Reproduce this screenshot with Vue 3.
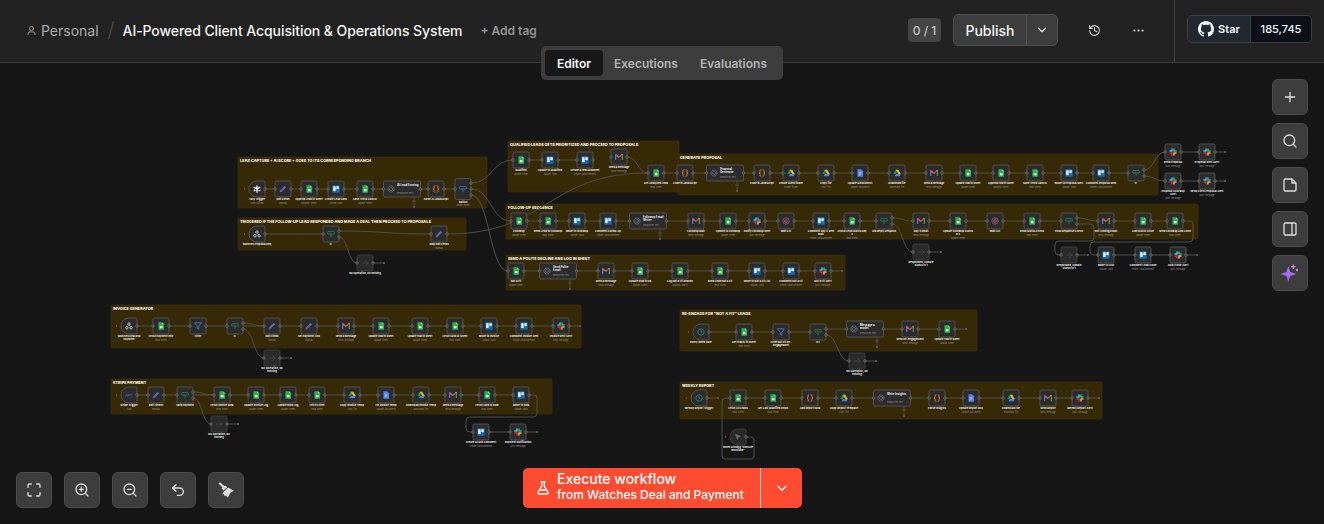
<template>
  <div class="page">
    <header class="topbar">
      <div class="crumbs">
        <svg class="user-icon" viewBox="0 0 16 16" fill="none" stroke="currentColor" stroke-width="1.2" stroke-linecap="round">
          <circle cx="8" cy="5" r="3" />
          <path d="M3 14v-1.2A3 3 0 0 1 6 10h4a3 3 0 0 1 3 2.8V14" />
        </svg>
        <span class="personal">Personal</span>
        <span class="slash">/</span>
        <span class="title">AI-Powered Client Acquisition &amp; Operations System</span>
        <span class="add-tag">+ Add tag</span>
      </div>
      <div class="actions">
        <span class="counter">0 / 1</span>
        <div class="publish">
          <button class="publish-main">Publish</button>
          <button class="publish-more">
            <svg viewBox="0 0 16 16" fill="none" stroke="currentColor" stroke-width="1.4" stroke-linecap="round" stroke-linejoin="round"><path d="M4 6l4 4 4-4" /></svg>
          </button>
        </div>
        <button class="bare history">
          <svg viewBox="0 0 24 24" fill="none" stroke="currentColor" stroke-width="2" stroke-linecap="round" stroke-linejoin="round"><path d="M3 12a9 9 0 1 0 3-6.7L3 8" /><path d="M3 3v5h5" /><path d="M12 7v5l4 2" /></svg>
        </button>
        <button class="bare dots">
          <svg viewBox="0 0 16 16" fill="currentColor"><circle cx="3" cy="8" r="1.3" /><circle cx="8" cy="8" r="1.3" /><circle cx="13" cy="8" r="1.3" /></svg>
        </button>
      </div>
      <div class="star-wrap">
        <div class="gh-star">
          <span class="gh-left">
            <svg viewBox="0 0 16 16" fill="currentColor"><path d="M8 0C3.58 0 0 3.58 0 8c0 3.54 2.29 6.53 5.47 7.59.4.07.55-.17.55-.38 0-.19-.01-.82-.01-1.49-2.01.37-2.53-.49-2.69-.94-.09-.23-.48-.94-.82-1.13-.28-.15-.68-.52-.01-.53.63-.01 1.08.58 1.23.82.72 1.21 1.87.87 2.33.66.07-.52.28-.87.51-1.07-1.78-.2-3.64-.89-3.64-3.95 0-.87.31-1.59.82-2.15-.08-.2-.36-1.02.08-2.12 0 0 .67-.21 2.2.82.64-.18 1.32-.27 2-.27.68 0 1.36.09 2 .27 1.53-1.04 2.2-.82 2.2-.82.44 1.1.16 1.92.08 2.12.51.56.82 1.27.82 2.15 0 3.07-1.87 3.75-3.65 3.95.29.25.54.73.54 1.48 0 1.07-.01 1.93-.01 2.2 0 .21.15.46.55.38A8.013 8.013 0 0016 8c0-4.42-3.58-8-8-8z" /></svg>
            Star
          </span>
          <span class="gh-count">185,745</span>
        </div>
      </div>
    </header>

    <main class="canvas">
      <svg class="flow" viewBox="0 63 1324 461" width="1324" height="461">
        <defs>
          <symbol id="i-sheets" viewBox="0 0 10 10">
            <path d="M1.8 .2h4.5L8.8 2.700v7.100H1.800z" fill="#2bb24c" />
            <path d="M6.300 .2v2.500h2.500z" fill="#8fdca2" />
            <rect x="3.500" y="5" width="3.400" height="2.800" fill="#e8f7ec" />
          </symbol>
          <symbol id="i-trello" viewBox="0 0 10 10">
            <rect x=".3" y=".3" width="9.400" height="9.400" rx="1" fill="#0b6db3" />
            <rect x="1.600" y="1.600" width="2.900" height="6" fill="#fff" />
            <rect x="5.500" y="1.600" width="2.900" height="3.600" fill="#fff" />
          </symbol>
          <symbol id="i-gmail" viewBox="0 0 10 10">
            <path d="M.8 8.800V2.400L5 5.800" fill="none" stroke="#4285f4" stroke-width="1.500" />
            <path d="M1 2l4 3.200L9 2" fill="none" stroke="#ea4335" stroke-width="1.600" />
            <path d="M9.200 8.800V2.400" fill="none" stroke="#34a853" stroke-width="1.500" />
            <path d="M8.400 2.400l1-.8" fill="none" stroke="#fbbc04" stroke-width="1.400" />
          </symbol>
          <symbol id="i-slack" viewBox="0 0 10 10" fill="none" stroke-width="1.900" stroke-linecap="round">
            <path d="M3.800 1.200v2.600M1.200 3.800h2.600" stroke="#36c5f0" />
            <path d="M8.800 3.800H6.200M6.200 1.200v2.600" stroke="#2eb67d" />
            <path d="M6.200 8.800V6.200M8.800 6.200H6.200" stroke="#ecb22e" />
            <path d="M1.200 6.200h2.600M3.800 6.200v2.600" stroke="#e01e5a" />
          </symbol>
          <symbol id="i-drive" viewBox="0 0 10 10">
            <path d="M3.400 .8h3.200L3.400 6.400H.2z" fill="#0f9d58" />
            <path d="M6.600 .8L9.800 6.400H6.600L3.400 .8z" fill="#f4b400" />
            <path d="M2 9.200l1.600-2.800h6.200L8.200 9.200z" fill="#4285f4" />
          </symbol>
          <symbol id="i-docs" viewBox="0 0 10 10">
            <path d="M1.800 .2h4.500L8.800 2.700v7.100H1.800z" fill="#4f84f0" />
            <path d="M3.400 4.600h3.400M3.400 6h3.400M3.400 7.400h2.400" stroke="#dce8ff" stroke-width=".6" />
          </symbol>
          <symbol id="i-code" viewBox="0 0 10 10" fill="none" stroke="#ff8a1f" stroke-width="1.100" stroke-linecap="round">
            <path d="M3.600 .8C2.200 .8 2.600 2.400 2.600 3.400S2.200 5 1.200 5c1 0 1.400.6 1.400 1.600s-.4 2.600 1 2.600" />
            <path d="M6.400 .8c1.400 0 1 1.600 1 2.600S7.800 5 8.800 5c-1 0-1.400.6-1.400 1.600s.4 2.600-1 2.600" />
          </symbol>
          <symbol id="i-edit" viewBox="0 0 10 10">
            <path d="M.8 7.400L7 1l2 2-6.400 6.200H.8z" fill="#5f5fb3" />
            <path d="M2.200 7L7 2.200" stroke="#8d8de0" stroke-width=".4" />
          </symbol>
          <symbol id="i-if" viewBox="0 0 10 10" fill="none" stroke="#1f8a5b" stroke-width="1">
            <path d="M5 5v4" />
            <path d="M1.200 2h7.600L9.800 3.400 8.800 5H1.200L.4 3.400z" />
          </symbol>
          <symbol id="i-switch" viewBox="0 0 10 10" fill="none" stroke="#2f7fc1" stroke-width="1">
            <path d="M5 5v4" />
            <path d="M1.200 2h7.600L9.800 3.400 8.800 5H1.200L.4 3.400z" />
          </symbol>
          <symbol id="i-filter" viewBox="0 0 10 10">
            <path d="M.6 1h8.800L6 5.200V9L4 8V5.200z" fill="none" stroke="#3b82c4" stroke-width="1.100" stroke-linejoin="round" />
          </symbol>
          <symbol id="i-wait" viewBox="0 0 10 10" fill="none" stroke="#c4637c">
            <circle cx="5" cy="5" r="4" stroke-width=".8" />
            <circle cx="5" cy="5" r="1.700" stroke-width="1" />
          </symbol>
          <symbol id="i-noop" viewBox="0 0 10 10" fill="none" stroke="#4a4a4a" stroke-width="1.100">
            <path d="M1 5h8M5.400 1.600L9 5 5.400 8.400" />
          </symbol>
          <symbol id="i-webhook" viewBox="0 0 10 10" fill="none" stroke="#c9c9c9" stroke-width="1.200">
            <circle cx="5" cy="2.600" r="1.500" />
            <circle cx="2.400" cy="7.200" r="1.500" />
            <circle cx="7.600" cy="7.200" r="1.500" />
          </symbol>
          <symbol id="i-form" viewBox="0 0 10 10" fill="none" stroke="#fff" stroke-width="1.600" stroke-linecap="round">
            <path d="M5 1v8M1.500 3l7 4M8.500 3l-7 4" />
          </symbol>
          <symbol id="i-clock" viewBox="0 0 10 10" fill="none" stroke="#1f9a8c" stroke-width=".9">
            <circle cx="5" cy="5" r="4" />
            <path d="M5 2.600V5l1.600 1" />
          </symbol>
          <symbol id="i-stripe" viewBox="0 0 10 10" fill="none" stroke="#5f55e6" stroke-width=".9">
            <path d="M.6 6.400C1.400 4 3 3.600 3.600 5s-1 2-2 1.400M4.600 4v2.400M6.400 3.400v3M6.400 5c1-.9 2.800-.7 3 .4" />
          </symbol>
          <symbol id="i-ai" viewBox="0 0 10 10" fill="none" stroke="#a3a3a3" stroke-width=".9">
            <circle cx="5" cy="5" r="3.800" stroke-dasharray="1.200 .5" />
            <circle cx="5" cy="5" r="1.800" stroke-dasharray="1 .5" />
          </symbol>
          <symbol id="i-chat" viewBox="0 0 10 10">
            <path d="M1 1l8 3.200-3.200 1.200L4.400 9z" fill="#6a6a6a" />
          </symbol>
        </defs>

        <g v-for="s in stickies" :key="s.title">
          <rect class="sticky" :x="s.x" :y="s.y" :width="s.w" :height="s.h" rx="1" />
          <text class="sticky-title" :x="s.x + 2" :y="s.y + 5">{{ s.title }}</text>
        </g>

        <path v-for="(d, i) in edges" :key="'e' + i" class="edge" :d="d" />

        <g v-for="(e, i) in stubs" :key="'s' + i">
          <path class="edge" :d="`M${e[0]} ${e[1]}H${e[2]}`" />
          <rect class="end-dot" :x="e[2] - 1" :y="e[1] - 1" width="2" height="2" />
        </g>

        <g v-for="(n, i) in nodes" :key="'n' + i">
          <path class="node" :class="{ muted: n.icon === 'noop' || n.icon === 'chat' }" :d="nodeShape(n)" />
          <circle v-if="n.trigger" class="bolt" :cx="n.x - n.w / 2 - 4.5" :cy="n.y" r=".7" />
          <use :href="'#i-' + n.icon" :x="n.w > 20 ? n.x - n.w / 2 + 3.5 : n.x - 4" :y="n.y - 4" width="8" height="8" />
          <template v-if="n.w > 20">
            <text v-for="(l, k) in n.lines" :key="k" class="ai-label" :x="n.x - n.w / 2 + 13.5" :y="n.y - 3.5 + k * 3">{{ l }}</text>
            <text class="ai-sub" :x="n.x - n.w / 2 + 13.5" :y="n.y + 5">Resources Text</text>
            <path class="edge" :d="`M${n.x + 12} ${n.y + 8}V${n.y + 18}M${n.x + 10} ${n.y + 12}h4`" />
            <rect class="end-dot" :x="n.x + 11" :y="n.y + 17" width="2" height="2" />
          </template>
          <template v-else>
            <text v-for="(l, k) in n.lines" :key="k" class="label" :x="n.x" :y="n.y + n.h / 2 + 3.4 + k * 3">{{ l }}</text>
            <text v-if="n.sub" class="sub" :x="n.x" :y="n.y + n.h / 2 + 6.6 + (n.lines.length - 1) * 3">{{ n.sub }}</text>
          </template>
          <circle v-if="!n.trigger" class="port" :cx="n.x - n.w / 2" :cy="n.y" r="1.3" />
          <circle v-for="o in n.outs" :key="o" class="port" :cx="n.x + n.w / 2" :cy="n.y + o" r="1.3" />
        </g>
      </svg>

      <nav class="tabs">
        <span class="tab active">Editor</span>
        <span class="tab">Executions</span>
        <span class="tab">Evaluations</span>
      </nav>

      <aside class="side-tools">
        <button class="tool">
          <svg viewBox="0 0 24 24" fill="none" stroke="currentColor" stroke-width="2" stroke-linecap="round"><path d="M5 12h14M12 5v14" /></svg>
        </button>
        <button class="tool">
          <svg viewBox="0 0 24 24" fill="none" stroke="currentColor" stroke-width="2" stroke-linecap="round"><circle cx="11" cy="11" r="8" /><path d="M21 21l-4.300-4.300" /></svg>
        </button>
        <button class="tool">
          <svg viewBox="0 0 24 24" fill="none" stroke="currentColor" stroke-width="2" stroke-linejoin="round"><path d="M5 3h10l6 6v10a2 2 0 0 1-2 2H5a2 2 0 0 1-2-2V5a2 2 0 0 1 2-2z" /><path d="M15 3v6h6" /></svg>
        </button>
        <button class="tool">
          <svg viewBox="0 0 24 24" fill="none" stroke="currentColor" stroke-width="2"><rect x="3" y="3" width="18" height="18" rx="2" /><path d="M15 3v18" /></svg>
        </button>
        <button class="tool">
          <svg class="spark-icon" viewBox="0 0 20 20">
            <defs>
              <linearGradient id="spark" x1="0" y1="1" x2="1" y2="0">
                <stop offset="0" stop-color="#7a5cff" />
                <stop offset="1" stop-color="#d47bf0" />
              </linearGradient>
            </defs>
            <path d="M8.300 3l1.900 6.100 6.100 1.900-6.100 1.900-1.900 6.100-1.900-6.100L.3 11l6.100-1.900z" fill="url(#spark)" />
            <path d="M13.300 1.400v4.600M11 3.700h4.600" stroke="#c884f2" stroke-width="1.300" />
            <circle cx="17" cy="7" r="1.200" fill="#d47bf0" />
          </svg>
        </button>
      </aside>

      <div class="bottom-tools">
        <button class="tool">
          <svg viewBox="0 0 24 24" fill="none" stroke="currentColor" stroke-width="2" stroke-linecap="round"><path d="M3 8V5a2 2 0 0 1 2-2h3M16 3h3a2 2 0 0 1 2 2v3M21 16v3a2 2 0 0 1-2 2h-3M8 21H5a2 2 0 0 1-2-2v-3" /></svg>
        </button>
        <button class="tool">
          <svg viewBox="0 0 24 24" fill="none" stroke="currentColor" stroke-width="2" stroke-linecap="round"><circle cx="11" cy="11" r="8" /><path d="M21 21l-4.300-4.300M11 8v6M8 11h6" /></svg>
        </button>
        <button class="tool">
          <svg viewBox="0 0 24 24" fill="none" stroke="currentColor" stroke-width="2" stroke-linecap="round"><circle cx="11" cy="11" r="8" /><path d="M21 21l-4.300-4.300M8 11h6" /></svg>
        </button>
        <button class="tool">
          <svg viewBox="0 0 24 24" fill="none" stroke="currentColor" stroke-width="2" stroke-linecap="round" stroke-linejoin="round"><path d="M9 14L4 9l5-5" /><path d="M4 9h10.500a5.500 5.500 0 0 1 0 11H11" /></svg>
        </button>
        <button class="tool">
          <svg viewBox="0 0 16 16" fill="currentColor"><path d="M.5 1.500L2 .2l4.500 4-1.700 1.600z" /><path d="M3.600 6.200L7.300 3.400l1.900 1.800-3.700 3.400z" /><path d="M6 9.400l4-3.900 6 3.300-3.600 1.900-2.600 5-1.900-2.300-1 .9-1.500-2.400-1.500.5z" /></svg>
        </button>
      </div>

      <div class="execute">
        <button class="execute-main">
          <svg viewBox="0 0 24 24" fill="none" stroke="currentColor" stroke-width="2" stroke-linecap="round" stroke-linejoin="round"><path d="M9 3h6M10 3v6.500L4.500 18.500A1.700 1.700 0 0 0 6 21h12a1.700 1.700 0 0 0 1.500-2.500L14 9.500V3" /><path d="M7.500 15h9" /></svg>
          <span class="execute-text">
            <strong>Execute workflow</strong>
            <small>from Watches Deal and Payment</small>
          </span>
        </button>
        <button class="execute-more">
          <svg viewBox="0 0 16 16" fill="none" stroke="currentColor" stroke-width="1.500" stroke-linecap="round" stroke-linejoin="round"><path d="M3.500 6l4.500 4.500L12.500 6" /></svg>
        </button>
      </div>
    </main>
  </div>
</template>

<script setup>
const stickies = [
  { title: 'LEAD CAPTURE + AI SCORE + GOES TO ITS CORRESPONDING BRANCH', x: 238, y: 157, w: 249, h: 51 },
  { title: 'TRIGGERED IF THE FOLLOW-UP LEAD RESPONDED AND MADE A DEAL THEN PROCEED TO PROPOSALS', x: 238, y: 218, w: 228, h: 32 },
  { title: 'QUALIFIED LEADS GETS PRIORITIZED AND PROCEED TO PROPOSALS', x: 508, y: 141, w: 171, h: 51 },
  { title: 'GENERATE PROPOSAL', x: 678, y: 154, w: 480, h: 41 },
  { title: 'FOLLOW-UP SEQUENCE', x: 506, y: 204, w: 692, h: 35 },
  { title: 'SEND A POLITE DECLINE AND LOG IN SHEET', x: 506, y: 255, w: 339, h: 35 },
  { title: 'INVOICE GENERATOR', x: 111, y: 305, w: 470, h: 43 },
  { title: 'STRIPE PAYMENT', x: 111, y: 379, w: 441, h: 35 },
  { title: 'RE-ENGAGE FOR "NOT A FIT" LEADS', x: 680, y: 310, w: 297, h: 41 },
  { title: 'WEEKLY REPORT', x: 680, y: 382, w: 422, h: 37 }
]

// [x, icon, label, sub] per row; options in the 5th slot
const rows = [
  { y: 189, items: [
    [257, 'form', 'Tally Trigger', 'Form Submit', { trigger: true }],
    [283, 'edit', 'Edit Fields', 'manual'],
    [309, 'sheets', 'Append Lead in Sheet', 'append: sheet'],
    [336, 'trello', 'Create Lead Card', 'create: card'],
    [365, 'sheets', 'Save Trello Card ID', 'update: sheet'],
    [402, 'ai', 'AI Lead Scoring', '', { w: 37 }],
    [436, 'code', 'Parse AI JavaScript', ''],
    [463, 'switch', 'Switch', 'mode: Rules', { h: 21, outs: [-6, 0, 6], last: true }]
  ] },
  { y: 234, items: [
    [257, 'webhook', 'Watches Proposal Req', '', { trigger: true, link: false }],
    [331, 'if', 'IF', '', { outs: [-3, 3], link: false }],
    [439, 'edit', 'Map Edit Fields', 'manual', { link: false }]
  ] },
  { y: 263, items: [[365, 'noop', 'No Operation, do nothing', '']] },
  { y: 160, items: [
    [521, 'sheets', 'Qualified', 'update: sheet'],
    [550, 'trello', 'Update to Qualified', 'update: card'],
    [585, 'trello', 'Create a new comment', 'create: cardComment']
  ] },
  { y: 157, items: [[619, 'gmail', 'Send a message', 'send: message']] },
  { y: 173, items: [
    [656, 'sheets', 'Get Analyzed Lead', 'read: sheet'],
    [685, 'code', 'Code in JavaScript', ''],
    [725, 'ai', 'Proposal\nGenerator', '', { w: 37 }],
    [762, 'code', 'Code in JavaScript', ''],
    [791, 'drive', 'Create client folder', 'create: folder'],
    [826, 'drive', 'Copy file', 'copy: file'],
    [860, 'docs', 'Update a document', 'update: document'],
    [897, 'drive', 'Download file', 'download: file'],
    [934, 'gmail', 'Send a message', 'send: message'],
    [968, 'sheets', 'Update row in sheet', 'update: sheet'],
    [1001, 'sheets', 'Append row in sheet', 'append: sheet'],
    [1035, 'sheets', 'Save Trello Card ID', 'read: sheet'],
    [1069, 'trello', 'Move to Proposal Sent', 'update: card'],
    [1101, 'trello', 'Comment Proposal Sent', 'create: cardComment'],
    [1136, 'if', 'IF', '', { outs: [-3, 3], last: true }]
  ] },
  { y: 152, items: [
    [1173, 'slack', 'Send Proposal', 'post: message'],
    [1207, 'slack', 'Proposal Sent Alert', 'post: message']
  ] },
  { y: 181, items: [
    [1173, 'slack', 'Proposal Followup\nAlert', 'post: message'],
    [1207, 'slack', 'Send Client Proposal Alert', 'post: message']
  ] },
  { y: 221, items: [
    [519, 'sheets', 'Followup', 'update: sheet'],
    [548, 'sheets', 'Send Lead to Followup', 'read: sheet'],
    [577, 'trello', 'Move to Followup', 'update: card'],
    [608, 'trello', 'Comment Follow-Up', 'create: cardComment'],
    [648, 'ai', 'Followup Email\nWriter', '', { w: 37 }],
    [696, 'gmail', 'Followup Mail', 'send: message'],
    [728, 'sheets', 'Update to Followup', 'update: sheet'],
    [757, 'slack', 'Notify Followup Sent', 'post: message'],
    [786, 'wait', 'Wait 2 D', ''],
    [821, 'trello', 'Comment Day 2 Sent\nMail', 'create: cardComment'],
    [852, 'sheets', 'Check Lead Status Day\n2', 'read: sheet'],
    [884, 'if', 'Did Reply Respond', '', { outs: [-3, 3], last: true }]
  ] },
  { y: 221, items: [
    [921, 'gmail', 'Day 4 Email', 'send: message'],
    [958, 'sheets', 'Update Followup Status\nD 4', 'update: sheet'],
    [995, 'wait', 'Wait 3 D', ''],
    [1032, 'sheets', 'Read Status Check', 'read: sheet'],
    [1069, 'if', 'Final Response Check', '', { outs: [-3, 3], last: true }]
  ] },
  { y: 221, items: [
    [1106, 'gmail', 'Exit Closing Email', 'send: message'],
    [1143, 'sheets', 'Add Status Close', 'update: sheet'],
    [1175, 'sheets', 'Send Followup Add Close', 'read: sheet']
  ] },
  { y: 252, items: [[921, 'noop', 'Responded, Update\nStatus to 1', '']] },
  { y: 255, items: [
    [1069, 'noop', 'Responded, Update\nStatus to 1', '', { link: false }],
    [1106, 'trello', 'Move to Lost', 'update: card'],
    [1143, 'trello', 'Comment Lead Close', 'create: cardComment'],
    [1178, 'slack', 'Auto Close Alert', 'post: message']
  ] },
  { y: 271, items: [
    [516, 'sheets', 'Not a Fit', 'update: sheet'],
    [558, 'ai', 'Send Polite\nEmail', '', { w: 37 }],
    [606, 'gmail', 'Send a message', 'send: message'],
    [640, 'sheets', 'Update Row in DB', 'update: sheet'],
    [680, 'sheets', 'Log Not a Fit Reason', 'append: sheet'],
    [720, 'sheets', 'Send Lead Not a Fit', 'read: sheet'],
    [757, 'trello', 'Move to Not a Fit List', 'update: card'],
    [791, 'trello', 'Comment Not a Fit', 'create: cardComment'],
    [823, 'slack', 'Not a Fit Alert', 'post: message']
  ] },
  { y: 326, items: [
    [129, 'webhook', 'Watches Deal and\nPayment', '', { trigger: true }],
    [161, 'sheets', 'Fetch Payment Info', 'read: sheet'],
    [198, 'filter', 'Filter', ''],
    [235, 'if', 'IF', '', { outs: [-3, 3] }],
    [272, 'edit', 'Edit Fields', 'manual'],
    [309, 'edit', 'Set Payment Link', 'manual'],
    [346, 'gmail', 'Send a message', 'send: message'],
    [381, 'sheets', 'Update row in sheet', 'update: sheet'],
    [420, 'sheets', 'Update row in sheet', 'update: sheet'],
    [455, 'sheets', 'Fetch Card ID Sheet', 'read: sheet'],
    [489, 'trello', 'Move to Invoice', 'update: card'],
    [524, 'trello', 'Comment Invoice Sent', 'create: cardComment'],
    [561, 'slack', 'Invoice Sent Alert', 'post: message']
  ] },
  { y: 358, items: [[272, 'noop', 'No Operation, do\nnothing', '']] },
  { y: 395, items: [
    [129, 'stripe', 'Stripe Trigger', 'Paid', { trigger: true }],
    [156, 'edit', 'Edit Fields1', 'manual'],
    [185, 'if', 'Valid Payment', '', { outs: [-3, 3] }],
    [222, 'sheets', 'Fetch Invoice Row', 'read: sheet'],
    [256, 'sheets', 'Update Invoice Log', 'update: sheet'],
    [288, 'sheets', 'Update MRR Log', 'update: sheet'],
    [317, 'sheets', 'Fetch Client', 'read: sheet'],
    [352, 'drive', 'Copy Invoice Temp', 'copy: file'],
    [386, 'docs', 'Fill Invoice Temp', 'update: document'],
    [421, 'drive', 'Download Invoice Temp', 'download: file'],
    [453, 'gmail', 'Send a message', 'send: message'],
    [487, 'sheets', 'Fetch Card ID Row', 'read: sheet'],
    [521, 'trello', 'Move to Paid', 'update: card', { last: true }]
  ] },
  { y: 424, items: [[219, 'noop', 'No Operation, do\nnothing', '']] },
  { y: 432, items: [
    [481, 'trello', 'Create a Card Comment', 'create: cardComment'],
    [518, 'slack', 'Payment Notification', 'post: message']
  ] },
  { y: 332, items: [
    [701, 'clock', 'Every Week Date', '', { trigger: true }],
    [744, 'sheets', 'Get row(s) in sheet', 'read: sheet'],
    [781, 'filter', 'Filter Not Fit Re-\nEngagement', ''],
    [818, 'if', 'IF1', '', { outs: [-3, 3], last: true }]
  ] },
  { y: 329, items: [
    [865, 'ai', 'Message a\nmodel', '', { w: 37 }],
    [910, 'gmail', 'Send Re-engagement', 'send: message'],
    [947, 'sheets', 'Update row in sheet', 'update: sheet']
  ] },
  { y: 361, items: [[857, 'noop', 'No Operation, do\nnothing', '']] },
  { y: 398, items: [
    [699, 'clock', 'Weekly Report Trigger', '', { trigger: true, link: false }],
    [738, 'sheets', 'Fetch All Leads', 'read: sheet'],
    [773, 'sheets', 'Get Last Qualified Deals', 'read: sheet'],
    [810, 'code', 'Add Report Data', ''],
    [844, 'drive', 'Copy Report Template', 'copy: file'],
    [892, 'ai', 'Write Insights', '', { w: 37 }],
    [937, 'code', 'Parse Insights', ''],
    [971, 'docs', 'Update Report Doc', 'update: document'],
    [1011, 'drive', 'Download File', 'download: file'],
    [1048, 'gmail', 'Send Report', 'send: message'],
    [1080, 'slack', 'Weekly Report Alert', 'post: message']
  ] },
  { y: 437, items: [[738, 'chat', 'When clicking "Execute\nworkflow"', '', { trigger: true, link: false }]] }
]

const nodes = []
const edges = []

rows.forEach((row) => {
  row.items.forEach((item, i) => {
    const [x, icon, label, sub, opts = {}] = item
    const w = opts.w || 16
    const h = opts.h || 16
    nodes.push({
      x, y: row.y, w, h, icon, sub,
      lines: label.split('\n'),
      trigger: !!opts.trigger,
      outs: opts.outs || [0]
    })
    const next = row.items[i + 1]
    if (next && opts.link !== false && !opts.last) {
      const nextW = (next[4] && next[4].w) || 16
      edges.push(`M${x + w / 2} ${row.y}H${next[0] - nextW / 2}`)
    }
  })
})

const curve = (x1, y1, x2, y2) => {
  const mid = (x2 - x1) / 2
  return `M${x1} ${y1}C${x1 + mid} ${y1} ${x2 - mid} ${y2} ${x2} ${y2}`
}

// branches and loop-backs, written by hand
edges.push(
  curve(471, 183, 513, 160),
  curve(471, 189, 511, 221),
  curve(471, 195, 508, 271),
  curve(265, 234, 323, 234),
  curve(339, 231, 431, 234),
  curve(339, 237, 357, 263),
  curve(447, 234, 648, 173),
  curve(627, 157, 648, 173),
  curve(1144, 170, 1165, 152),
  curve(1144, 176, 1165, 181),
  curve(892, 218, 913, 221),
  curve(892, 224, 913, 252),
  curve(1077, 218, 1098, 221),
  'M1077 224H1090Q1094 224 1094 228V238Q1094 241 1090 241H1059Q1055 241 1055 245V251Q1055 255 1059 255H1061',
  'M1183 221H1190Q1193 221 1193 224V238Q1193 242 1189 242H1094Q1090 242 1090 246V251Q1090 255 1094 255H1098',
  curve(243, 323, 264, 326),
  curve(243, 329, 264, 358),
  curve(193, 392, 214, 395),
  curve(193, 398, 211, 424),
  'M529 395H534Q537 395 537 398V413Q537 417 533 417H470Q466 417 466 421V428Q466 432 470 432H473',
  curve(826, 329, 847, 329),
  curve(826, 335, 849, 361),
  'M746 437H751Q754 437 754 440V456Q754 459 751 459H725Q722 459 722 456V402Q722 398 726 398H730'
)

// trailing output with its square end
const stubs = [
  [1215, 152, 1225],
  [1215, 181, 1225],
  [929, 252, 941],
  [1077, 255, 1088],
  [1186, 255, 1197],
  [373, 263, 384],
  [831, 271, 842],
  [569, 326, 580],
  [280, 358, 291],
  [227, 424, 238],
  [526, 432, 537],
  [955, 329, 966],
  [865, 361, 876],
  [707, 398, 718],
  [1088, 398, 1099]
]

const nodeShape = (n) => {
  const l = n.x - n.w / 2
  const r = n.x + n.w / 2
  const t = n.y - n.h / 2
  const b = n.y + n.h / 2
  if (n.trigger) {
    return `M${l + 8} ${t}H${r - 1.5}Q${r} ${t} ${r} ${t + 1.5}V${b - 1.5}Q${r} ${b} ${r - 1.5} ${b}H${l + 8}A8 8 0 0 1 ${l + 8} ${t}Z`
  }
  return `M${l + 1.5} ${t}H${r - 1.5}Q${r} ${t} ${r} ${t + 1.5}V${b - 1.5}Q${r} ${b} ${r - 1.5} ${b}H${l + 1.5}Q${l} ${b} ${l} ${b - 1.5}V${t + 1.5}Q${l} ${t} ${l + 1.5} ${t}Z`
}
</script>

<style scoped>
.page {
  width: 1324px;
  height: 524px;
  display: flex;
  flex-direction: column;
  overflow: hidden;
  background: #161616;
  color: #f2f2f2;
  font-family: Inter, "Liberation Sans", sans-serif;
}

button {
  font-family: inherit;
  border: 0;
  padding: 0;
  cursor: pointer;
}

.topbar {
  height: 63px;
  flex: none;
  box-sizing: border-box;
  display: flex;
  align-items: center;
  background: #222222;
  border-bottom: 1px solid #404040;
  padding-left: 26px;
  padding-bottom: 2px;
}

.crumbs {
  display: flex;
  align-items: center;
  flex: 1;
}

.user-icon {
  width: 11px;
  height: 11px;
  color: #a8a8a8;
  margin-right: 4px;
}

.personal {
  font-size: 14px;
  color: #ababab;
}

.slash {
  font-size: 20px;
  font-weight: 300;
  color: #4f4f4f;
  margin: 0 8px 0 9px;
}

.title {
  font-size: 14px;
  font-weight: 500;
  color: #f4f4f4;
  letter-spacing: -0.08px;
}

.add-tag {
  font-size: 12px;
  font-weight: 600;
  color: #949494;
  margin-left: 18px;
}

.actions {
  display: flex;
  align-items: center;
}

.counter {
  width: 33px;
  height: 24px;
  display: flex;
  align-items: center;
  justify-content: center;
  background: #444444;
  border-radius: 4px;
  color: #c4c4c4;
  font-size: 12px;
  font-weight: 500;
}

.publish {
  display: flex;
  height: 32px;
  margin-left: 12px;
  border: 1px solid #4d4d4d;
  border-radius: 5px;
  box-sizing: border-box;
  background: #3d3d3d;
  overflow: hidden;
}

.publish-main {
  width: 72px;
  background: transparent;
  color: #f4f4f4;
  font-size: 14px;
  font-weight: 500;
}

.publish-more {
  width: 31px;
  background: transparent;
  color: #e8e8e8;
  border-left: 1px solid #555555;
  display: flex;
  align-items: center;
  justify-content: center;
}

.publish-more svg {
  width: 14px;
  height: 14px;
}

.bare {
  background: transparent;
  color: #d6d6d6;
  display: flex;
}

.history {
  margin-left: 30px;
}

.history svg {
  width: 13px;
  height: 13px;
}

.dots {
  margin-left: 31px;
  color: #ececec;
}

.dots svg {
  width: 13px;
  height: 13px;
}

.star-wrap {
  width: 150px;
  height: 62px;
  align-self: flex-start;
  margin-left: 29px;
  box-sizing: border-box;
  border-left: 1px solid #404040;
  padding: 15px 12px 0 12px;
}

.gh-star {
  display: flex;
  height: 28px;
  box-sizing: border-box;
  border: 1px solid #3a404a;
  border-radius: 5px;
  overflow: hidden;
  font-size: 11px;
  font-weight: 600;
  color: #f0f6fc;
}

.gh-left {
  width: 62px;
  display: flex;
  align-items: center;
  justify-content: center;
  gap: 4px;
  background: #212830;
  border-right: 1px solid #3a404a;
}

.gh-left svg {
  width: 16px;
  height: 16px;
}

.gh-count {
  flex: 1;
  display: flex;
  align-items: center;
  justify-content: center;
  background: #0d1117;
  font-weight: 500;
}

.canvas {
  position: relative;
  flex: 1;
}

.flow {
  position: absolute;
  inset: 0;
  display: block;
}

.sticky {
  fill: #362905;
  stroke: #433308;
  stroke-width: 0.6;
}

.sticky-title {
  font-size: 3.8px;
  font-weight: 800;
  fill: #fdf8e6;
}

.edge {
  fill: none;
  stroke: #54544e;
  stroke-width: 0.9;
}

.end-dot {
  fill: #555555;
}

.node {
  fill: #2c2c2c;
  stroke: #5c5c5c;
  stroke-width: 0.8;
}

.node.muted {
  stroke: #444444;
  fill: #2a2a2a;
}

.bolt {
  fill: #d4452c;
}

.port {
  fill: #3a3a3a;
  stroke: #8a8a8a;
  stroke-width: 0.5;
}

.label {
  font-size: 2.6px;
  font-weight: 700;
  fill: #f4f4f4;
  text-anchor: middle;
}

.sub {
  font-size: 2.2px;
  fill: #969696;
  text-anchor: middle;
}

.ai-label {
  font-size: 2.8px;
  font-weight: 700;
  fill: #f4f4f4;
}

.ai-sub {
  font-size: 2.2px;
  fill: #969696;
}

.tabs {
  position: absolute;
  left: 541px;
  top: -17px;
  width: 242px;
  height: 34px;
  box-sizing: border-box;
  display: flex;
  align-items: center;
  padding: 0 4px;
  background: #3d3d3d;
  border-radius: 5px;
  font-size: 12px;
  font-weight: 600;
}

.tab {
  height: 26px;
  display: flex;
  align-items: center;
  padding: 0 11px;
  color: #b4b4b4;
  border-radius: 4px;
}

.tab.active {
  width: 58px;
  box-sizing: border-box;
  justify-content: center;
  padding: 0;
  color: #fafafa;
  background: #181818;
}

.side-tools {
  position: absolute;
  right: 16px;
  top: 16px;
  display: flex;
  flex-direction: column;
  gap: 8px;
}

.bottom-tools {
  position: absolute;
  left: 16px;
  bottom: 16px;
  display: flex;
  gap: 12px;
}

.tool {
  width: 36px;
  height: 36px;
  box-sizing: border-box;
  display: flex;
  align-items: center;
  justify-content: center;
  background: #3d3d3d;
  border: 1px solid #4b4b4b;
  border-radius: 6px;
  color: #dedede;
}

.tool svg {
  width: 16px;
  height: 16px;
}

.tool svg.spark-icon {
  width: 20px;
  height: 20px;
}

.execute {
  position: absolute;
  left: 523px;
  bottom: 16px;
  width: 279px;
  height: 40px;
  display: flex;
  border-radius: 5px;
  overflow: hidden;
  background: #ff4b30;
  color: #ffffff;
}

.execute-main {
  width: 237px;
  display: flex;
  align-items: center;
  background: transparent;
  color: inherit;
  padding-left: 12px;
  gap: 6px;
}

.execute-main svg {
  width: 16px;
  height: 16px;
}

.execute-text {
  display: flex;
  flex-direction: column;
  align-items: flex-start;
  padding-bottom: 2px;
}

.execute-text strong {
  font-size: 14px;
  font-weight: 500;
  line-height: 16px;
}

.execute-text small {
  font-size: 12px;
  font-weight: 500;
  line-height: 16px;
}

.execute-more {
  flex: 1;
  background: transparent;
  color: inherit;
  border-left: 1px solid #f3d0c9;
  display: flex;
  align-items: center;
  justify-content: center;
}

.execute-more svg {
  width: 14px;
  height: 14px;
}
</style>

<style>
body {
  background: #161616;
}
</style>
